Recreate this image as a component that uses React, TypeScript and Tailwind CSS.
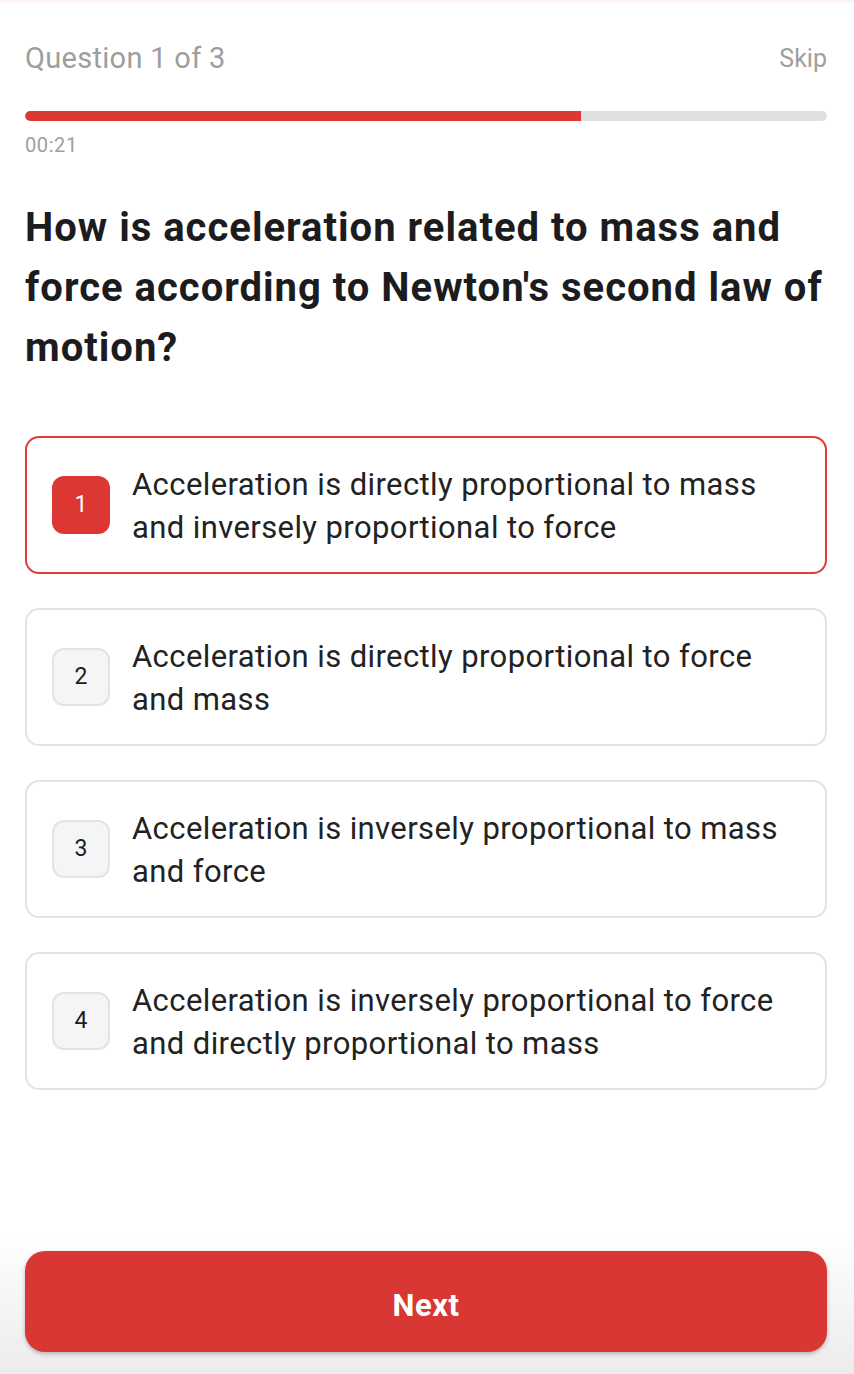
import React from "react";

const options = [
  "Acceleration is directly proportional to mass and inversely proportional to force",
  "Acceleration is directly proportional to force and mass",
  "Acceleration is inversely proportional to mass and force",
  "Acceleration is inversely proportional to force and directly proportional to mass",
];

export default function App() {
  const selected = 0;
  return (
    <div
      className="w-[854px] h-[1374px] bg-white flex flex-col overflow-hidden"
      style={{ fontFamily: "Roboto, 'Noto Sans', sans-serif" }}
    >
      <div className="h-[3px] bg-[#fcf3fc]" />
      <div className="pl-[25px] pr-[27px] pt-[40px] flex flex-col">
        <div className="flex justify-between items-center h-[32px]">
          <span className="text-[29px] tracking-[0.3px] text-[#9e9e9e]">Question 1 of 3</span>
          <span className="text-[25px] text-[#9e9e9e]">Skip</span>
        </div>
        <div className="mt-[36px] h-[10px] rounded-full bg-[#e0e0e0] overflow-hidden">
          <div className="h-full bg-[#dc3733] rounded-l-full" style={{ width: "69.3%" }} />
        </div>
        <div className="mt-[12px] text-[20px] tracking-[0.6px] leading-[24px] text-[#a0a0a0]">00:21</div>
        <h1 className="mt-[41px] text-[40px] leading-[60px] tracking-[1px] font-bold text-[#1c1c1e]">
          How is acceleration related to mass and force according to Newton's second law of motion?
        </h1>
        <div className="mt-[58px] flex flex-col gap-[34px]">
          {options.map((o, i) => {
            const sel = i === selected;
            return (
              <div
                key={i}
                className={
                  sel
                    ? "h-[138px] rounded-[14px] border-2 border-[#e03c3a] flex items-center pl-[25px] pr-[16px]"
                    : "h-[138px] rounded-[14px] border-2 border-[#e3e3e3] flex items-center pl-[25px] pr-[16px]"
                }
              >
                <div
                  className={
                    sel
                      ? "w-[58px] h-[58px] shrink-0 rounded-[12px] bg-[#dc3733] text-white flex items-center justify-center text-[23px]"
                      : "w-[58px] h-[58px] shrink-0 rounded-[12px] bg-[#f5f5f5] border-2 border-[#e3e3e3] text-[#1c1c1c] flex items-center justify-center text-[23px]"
                  }
                >
                  {i + 1}
                </div>
                <div className="ml-[22px] pt-[2px] text-[31px] leading-[43px] tracking-[0.4px] text-[#222222]">{o}</div>
              </div>
            );
          })}
        </div>
      </div>
      <div className="flex-1" />
      <div className="pl-[25px] pr-[27px] pb-[22px] pt-[20px] bg-gradient-to-b from-white to-[#ececec]">
        <button className="w-full h-[101px] pt-[10px] rounded-[20px] bg-[#d93733] text-white font-bold text-[31px] tracking-[0.5px] shadow-[0_2px_4px_rgba(0,0,0,0.25)]">
          Next
        </button>
      </div>
    </div>
  );
}
